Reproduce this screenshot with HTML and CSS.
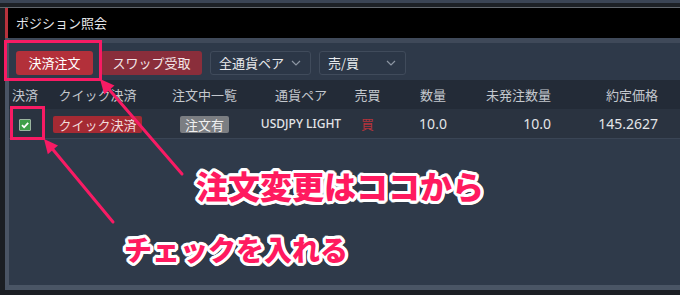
FILE: index.html
```html
<!DOCTYPE html>
<html lang="ja">
<head>
<meta charset="utf-8">
<link rel="stylesheet" href="styles.css">
</head>
<body>
<div class="app">
  <div class="topstrip"></div>
  <div class="topgap"></div>
  <div class="topline"></div>
  <div class="window">
    <div class="titlebar">ポジション照会</div>
    <div class="panel">
      <div class="sep"></div>
      <div class="toolbar">
        <button class="btn btn-primary">決済注文</button>
        <button class="btn btn-swap">スワップ受取</button>
        <div class="select sel-pair"><span>全通貨ペア</span><svg class="chev" width="10" height="6" viewBox="0 0 10 6"><path d="M1 1l4 4 4-4" fill="none" stroke="#8d96a3" stroke-width="1.2"/></svg></div>
        <div class="select sel-side"><span>売/買</span><svg class="chev" width="10" height="6" viewBox="0 0 10 6"><path d="M1 1l4 4 4-4" fill="none" stroke="#8d96a3" stroke-width="1.2"/></svg></div>
      </div>
      <div class="grid thead">
        <div>決済</div>
        <div>クイック決済</div>
        <div>注文中一覧</div>
        <div>通貨ペア</div>
        <div>売買</div>
        <div>数量</div>
        <div class="r r7">未発注数量</div>
        <div class="r r8">約定価格</div>
      </div>
      <div class="grid trow">
        <div><span class="check"><svg width="10" height="10" viewBox="0 0 10 10"><path d="M2 5.2l2.1 2.1L8.2 2.8" fill="none" stroke="#fff" stroke-width="1.8"/></svg></span></div>
        <div><span class="badge badge-red">クイック決済</span></div>
        <div><span class="badge badge-gray">注文有</span></div>
        <div class="pair">USDJPY LIGHT</div>
        <div class="buy">買</div>
        <div class="num">10.0</div>
        <div class="r r7 num">10.0</div>
        <div class="r r8 num">145.2627</div>
      </div>
      <div class="empty"></div>
    </div>
  </div>

  <div class="hl hl-order"></div>
  <div class="hl hl-check"></div>
  <svg class="arrows" width="680" height="295" viewBox="0 0 680 295">
    <line x1="182" y1="174" x2="107" y2="87" stroke="#f81b64" stroke-width="3" stroke-linecap="round"/>
    <polygon points="100,79 114.5,85.5 104.2,94.5" fill="#f81b64"/>
    <line x1="113" y1="222" x2="50" y2="146" stroke="#f81b64" stroke-width="3" stroke-linecap="round"/>
    <polygon points="44,139 58,145.5 47.8,154.3" fill="#f81b64"/>
  </svg>
  <div class="note note-order">注文変更はココから</div>
  <div class="note note-check">チェックを入れる</div>
</div>
</body>
</html>
```
FILE: styles.css
```css
* { box-sizing: border-box; }
html, body { margin: 0; padding: 0; }
body {
  background: #111317;
  font-family: "Noto Sans CJK JP", "Noto Sans", sans-serif;
  width: 680px;
  height: 295px;
  overflow: hidden;
}
.app {
  position: relative;
  width: 680px;
  height: 295px;
  background: #1b1e23;
}
.topstrip { height: 3px; background: #3b4555; }
.topgap { height: 4px; background: #1d2126; }
.topline { height: 1px; background: #62676d; }
.window { margin-left: 5px; }
.titlebar {
  height: 30px;
  background: #000;
  border-left: 3px solid #b8323c;
  color: #e6e8eb;
  font-size: 13px;
  line-height: 30px;
  padding-left: 8px;
}
.panel {
  display: flex;
  flex-direction: column;
  height: 252px;
  border-left: 4px solid #4a5464;
  border-bottom: 5px solid #4a5565;
  background: #2f3a4a;
}
.sep { height: 5px; background: #3f4959; flex: none; }
.toolbar {
  height: 37px;
  flex: none;
  display: flex;
  align-items: flex-start;
  gap: 8px;
  padding: 8px 0 0 7px;
  background: #2e3949;
}
.btn {
  height: 24px;
  border: 0;
  border-radius: 3px;
  color: #fff;
  font-family: inherit;
  font-size: 13px;
  line-height: 24px;
  padding: 0;
  text-align: center;
}
.btn-primary { width: 77px; background: #b3303a; }
.btn-swap { width: 101px; background: #8a2e3b; color: #f3e6e8; }
.select {
  height: 24px;
  border: 1px solid #404b5b;
  border-radius: 3px;
  background: #2c3747;
  color: #e8eaed;
  font-size: 13px;
  line-height: 22px;
  display: flex;
  align-items: center;
  justify-content: space-between;
  padding: 0 9px 0 8px;
}
.sel-pair { width: 101px; }
.sel-side { width: 87px; }
.grid {
  display: grid;
  grid-template-columns: 32px 113px 101px 92px 41px 90px 82px 1fr;
  align-items: center;
  text-align: center;
  flex: none;
}
.grid .r { text-align: right; }
.grid .r7 { padding-right: 9px; }
.grid .r8 { padding-right: 22px; }
.thead {
  height: 29px;
  background: #232b37;
  color: #c4c8ce;
  font-size: 13px;
}
.trow {
  height: 30px;
  background: #2a3340;
  border-bottom: 1px solid #3a4555;
  color: #e3e5e8;
  font-size: 13px;
}
.check {
  display: inline-flex;
  width: 12px;
  height: 12px;
  background: #3f9f49;
  border: 1px solid #9cb5a0;
  border-radius: 1px;
  align-items: center;
  justify-content: center;
  vertical-align: middle;
}
.check svg { display: block; }
.badge {
  display: inline-block;
  height: 17px;
  line-height: 17px;
  padding: 0 5px;
  border-radius: 2px;
  font-size: 13px;
  vertical-align: middle;
}
.badge-red { background: #a52a33; color: #f1dcdc; }
.badge-gray { background: #7b7e82; color: #f0f0f0; }
.pair { font-family: "Noto Sans", sans-serif; font-size: 12px; font-weight: 500; }
.buy { color: #b3343c; font-size: 13px; }
.num { font-family: "Noto Sans", sans-serif; font-size: 14px; }
.empty { flex: 1; }

.hl {
  position: absolute;
  border: 3px solid #f81b64;
}
.hl-order { left: 4px; top: 40px; width: 98px; height: 41px; }
.hl-check { left: 10px; top: 106px; width: 35px; height: 34px; }
.arrows { position: absolute; left: 0; top: 0; pointer-events: none; }
.note {
  position: absolute;
  color: #ff1a5f;
  font-weight: 900;
  line-height: 1;
  white-space: nowrap;
  text-shadow:
    2px 0 0 #fff, -2px 0 0 #fff, 0 2px 0 #fff, 0 -2px 0 #fff,
    2px 2px 0 #fff, -2px -2px 0 #fff, 2px -2px 0 #fff, -2px 2px 0 #fff,
    3px 0 0 #fff, -3px 0 0 #fff, 0 3px 0 #fff, 0 -3px 0 #fff,
    1px 3px 0 #fff, -1px 3px 0 #fff, 1px -3px 0 #fff, -1px -3px 0 #fff,
    3px 1px 0 #fff, 3px -1px 0 #fff, -3px 1px 0 #fff, -3px -1px 0 #fff;
}
.note-order { left: 196px; top: 169px; font-size: 32px; }
.note-check { left: 124px; top: 235px; font-size: 28px; }
```
